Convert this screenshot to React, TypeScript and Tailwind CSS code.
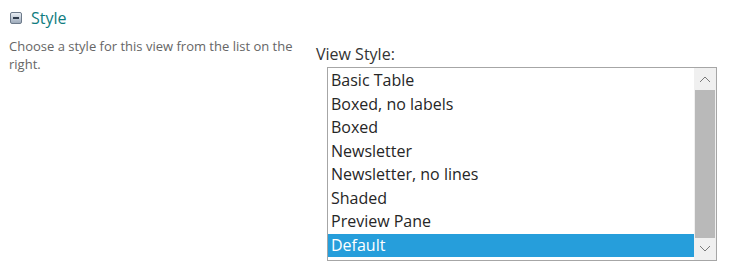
import React from "react";

const items = [
  "Basic Table",
  "Boxed, no labels",
  "Boxed",
  "Newsletter",
  "Newsletter, no lines",
  "Shaded",
  "Preview Pane",
  "Default",
];

export default function App() {
  return (
    <div
      className="w-[729px] h-[274px] bg-white relative overflow-hidden"
      style={{ fontFamily: '"Open Sans", "Noto Sans", sans-serif' }}
    >
      <div className="flex items-center pl-[10px] pt-[7px] h-[22px] box-content">
        <div className="w-[12px] h-[12px] rounded-[2px] border border-[#6d7a8a] bg-gradient-to-b from-[#e9eef4] to-[#9eabbb] flex items-center justify-center">
          <div className="w-[6px] h-[2px] bg-[#2f3b4b]" />
        </div>
        <span className="ml-[9px] text-[16px] text-[#0f7c80] leading-none">Style</span>
      </div>
      <div className="flex">
        <div className="w-[300px] pl-[9px] pt-[8px] text-[13px] leading-[18px] text-[#666666]">
          Choose a style for this view from the list on the right.
        </div>
        <div className="ml-[16px] pt-[14px]">
          <div className="text-[16px] leading-[22px] text-[#333333]">View Style:</div>
          <div className="ml-[11px] mt-[2px] w-[390px] h-[194px] border border-[#a6a6a6] flex">
            <div className="flex-1 flex flex-col pt-[1px]">
              {items.map((it) => (
                <div
                  key={it}
                  className={
                    "h-[23.5px] leading-[23.5px] pl-[3px] text-[16px] " +
                    (it === "Default" ? "bg-[#269edb] text-white" : "text-[#262626]")
                  }
                >
                  {it}
                </div>
              ))}
            </div>
            <div className="w-[22px] flex flex-col bg-[#f0f0f0]">
              <div className="h-[22px] flex items-center justify-center">
                <svg width="12" height="8" viewBox="0 0 12 8">
                  <path d="M1 7 L6 2 L11 7" fill="none" stroke="#7a7a7a" strokeWidth="1" />
                </svg>
              </div>
              <div className="flex-1 bg-[#b9b9b9] mx-[1px]" />
              <div className="h-[22px] flex items-center justify-center">
                <svg width="12" height="8" viewBox="0 0 12 8">
                  <path d="M1 1 L6 6 L11 1" fill="none" stroke="#7a7a7a" strokeWidth="1" />
                </svg>
              </div>
            </div>
          </div>
        </div>
      </div>
    </div>
  );
}
